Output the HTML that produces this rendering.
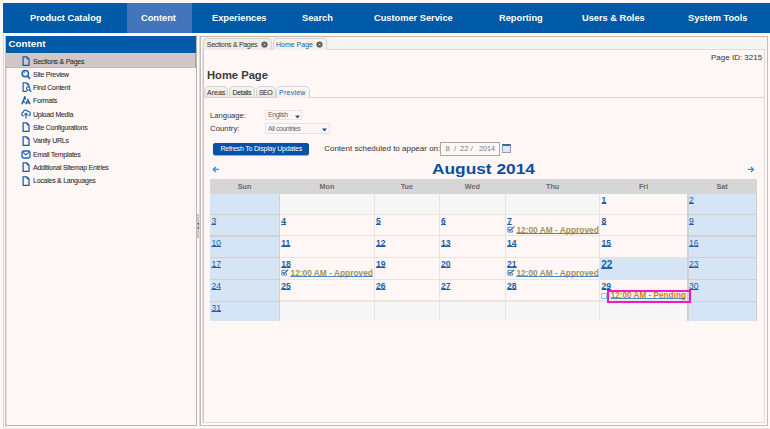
<!DOCTYPE html><html><head><meta charset="utf-8"><style>
*{margin:0;padding:0;box-sizing:border-box}
html,body{width:770px;height:429px;overflow:hidden;background:#fff6f6;font-family:"Liberation Sans",sans-serif;color:#333;position:relative}
.a{position:absolute;white-space:nowrap}
.nav{left:3px;top:3px;width:767px;height:29.5px;background:#005aa7}
.ni{color:#fff;font-weight:bold;font-size:8.2px;line-height:10px;transform:scaleX(1.13);transform-origin:0 0}
.side{font-size:7px;letter-spacing:-0.25px;line-height:8px;color:#2b2b2b;-webkit-text-stroke:0.07px #2b2b2b}
.ic{position:absolute}
.cal-l{color:#1f5ea8;text-decoration:underline;font-size:8.6px;line-height:9px}
.wd{font-weight:bold}
.cal-l{text-underline-offset:0px;text-decoration-skip-ink:none}
.ev{font-size:8.35px;font-weight:bold;line-height:9px;text-decoration:underline;text-decoration-color:#4a86c8;text-underline-offset:0px;text-decoration-skip-ink:none}
</style></head><body>
<div class="a nav"></div>
<div class="a" style="left:127px;top:3px;width:65px;height:29.5px;background:#4375bc"></div>
<div class="a ni" style="left:29.5px;top:14.4px">Product Catalog</div>
<div class="a ni" style="left:141.3px;top:14.4px">Content</div>
<div class="a ni" style="left:212.4px;top:14.4px">Experiences</div>
<div class="a ni" style="left:301.5px;top:14.4px">Search</div>
<div class="a ni" style="left:374.2px;top:14.4px">Customer Service</div>
<div class="a ni" style="left:499.1px;top:14.4px">Reporting</div>
<div class="a ni" style="left:582.1px;top:14.4px">Users &amp; Roles</div>
<div class="a ni" style="left:687.5px;top:14.4px">System Tools</div>
<div class="a" style="left:3px;top:34.5px;width:1px;height:392px;background:#d7d6d8"></div>
<div class="a" style="left:6px;top:53px;width:1px;height:372px;background:#e2e0e0"></div>
<div class="a" style="left:5px;top:35px;width:192px;height:391px;border:1px solid #b8b8b2;border-top:none;border-left-color:#c6bfc1"></div>
<div class="a" style="left:6px;top:36px;width:190px;height:17px;background:#005aa7"></div>
<div class="a" style="left:8.5px;top:38.3px;color:#fff;font-weight:bold;font-size:9.8px;line-height:11px">Content</div>
<div class="a" style="left:6px;top:53px;width:190px;height:15px;background:#d1c7c8;border-top:1px dotted #e0cdb8;border-bottom:1px dotted #aeaaa2;border-right:1px solid #aaa6a2"></div>
<div class="a side" style="left:33px;top:57.50px">Sections &amp; Pages</div>
<svg class="ic" style="left:21.5px;top:55.80px" width="8" height="11" viewBox="0 0 8 11"><path d="M1.1 0.9 H4.9 L7 3 V9.4 H1.1 Z" fill="none" stroke="#1559aa" stroke-width="1.25" stroke-linejoin="round"/><path d="M4.6 0.9 L7 3.3 H4.6 Z" fill="#1559aa"/></svg>
<div class="a side" style="left:33px;top:70.83px">Site Preview</div>
<svg class="ic" style="left:21px;top:69.13px" width="10" height="11" viewBox="0 0 10 11"><circle cx="4.3" cy="4.6" r="3.2" fill="none" stroke="#1b64b3" stroke-width="1.5"/><path d="M6.5 7 L9 9.8" stroke="#1b64b3" stroke-width="1.8"/><path d="M2.8 4.2 A1.5 1.5 0 0 1 4.5 2.8" fill="none" stroke="#1b64b3" stroke-width="0.9"/></svg>
<div class="a side" style="left:33px;top:84.16px">Find Content</div>
<svg class="ic" style="left:21.5px;top:82.46px" width="10" height="11" viewBox="0 0 10 11"><path d="M7 5 V3 L4.9 0.9 H1.1 V9.4 H5" fill="none" stroke="#1b64b3" stroke-width="1.25" stroke-linejoin="round"/><path d="M4.6 0.9 L7 3.3 H4.6 Z" fill="#1b64b3"/><circle cx="6.2" cy="6.6" r="1.7" fill="none" stroke="#1b64b3" stroke-width="1.1"/><path d="M7.4 7.8 L9.3 9.8" stroke="#1b64b3" stroke-width="1.3"/></svg>
<div class="a side" style="left:33px;top:97.49px">Formats</div>
<svg class="ic" style="left:21px;top:95.79px" width="10" height="11" viewBox="0 0 10 11"><path d="M0.9 8.3 L3.8 0.9 L4.6 3.5 M1.8 6 H4" fill="none" stroke="#1b64b3" stroke-width="1.5"/><path d="M4.6 8.3 L6.9 3.7 L9.2 8.3 M5.5 6.9 H8.3" fill="none" stroke="#1b64b3" stroke-width="1.3"/></svg>
<div class="a side" style="left:33px;top:110.82px">Upload Media</div>
<svg class="ic" style="left:20.5px;top:109.12px" width="10" height="10" viewBox="0 0 11 11"><path d="M3 7.5 H2.5 A2 2 0 0 1 2.3 3.6 A2.8 2.8 0 0 1 7.6 2.8 A2.3 2.3 0 0 1 8.3 7.5 H8" fill="none" stroke="#1b64b3" stroke-width="1.3"/><path d="M5.5 10.5 V5 M3.8 6.6 L5.5 4.8 L7.2 6.6" fill="none" stroke="#1b64b3" stroke-width="1.3"/></svg>
<div class="a side" style="left:33px;top:124.15px">Site Configurations</div>
<svg class="ic" style="left:21.5px;top:122.45px" width="8" height="11" viewBox="0 0 8 11"><path d="M1.1 0.9 H4.9 L7 3 V9.4 H1.1 Z" fill="none" stroke="#1559aa" stroke-width="1.25" stroke-linejoin="round"/><path d="M4.6 0.9 L7 3.3 H4.6 Z" fill="#1559aa"/></svg>
<div class="a side" style="left:33px;top:137.48px">Vanity URLs</div>
<svg class="ic" style="left:21.5px;top:135.78px" width="8" height="11" viewBox="0 0 8 11"><path d="M1.1 0.9 H4.9 L7 3 V9.4 H1.1 Z" fill="none" stroke="#1559aa" stroke-width="1.25" stroke-linejoin="round"/><path d="M4.6 0.9 L7 3.3 H4.6 Z" fill="#1559aa"/></svg>
<div class="a side" style="left:33px;top:150.81px">Email Templates</div>
<svg class="ic" style="left:21px;top:149.11px" width="10" height="11" viewBox="0 0 10 11"><rect x="1" y="2" width="8" height="7" rx="1.8" fill="none" stroke="#1b64b3" stroke-width="1.3"/><path d="M1.8 3.2 L5 6 L8.2 3.2" fill="none" stroke="#1b64b3" stroke-width="1.1"/></svg>
<div class="a side" style="left:33px;top:164.14px">Additional Sitemap Entries</div>
<svg class="ic" style="left:21.5px;top:162.44px" width="8" height="11" viewBox="0 0 8 11"><path d="M1.1 0.9 H4.9 L7 3 V9.4 H1.1 Z" fill="none" stroke="#1559aa" stroke-width="1.25" stroke-linejoin="round"/><path d="M4.6 0.9 L7 3.3 H4.6 Z" fill="#1559aa"/></svg>
<div class="a side" style="left:33px;top:177.47px">Locales &amp; Languages</div>
<svg class="ic" style="left:21.5px;top:175.77px" width="8" height="11" viewBox="0 0 8 11"><path d="M1.1 0.9 H4.9 L7 3 V9.4 H1.1 Z" fill="none" stroke="#1559aa" stroke-width="1.25" stroke-linejoin="round"/><path d="M4.6 0.9 L7 3.3 H4.6 Z" fill="#1559aa"/></svg>
<div class="a" style="left:197px;top:214px;width:3px;height:24px;background:repeating-linear-gradient(#d8d2d4 0 1px,#c4bec0 1px 2px)"></div>
<svg class="ic" style="left:197px;top:221.5px" width="3" height="8" viewBox="0 0 3 8"><path d="M2.6 0.3 L0.4 1.8 L2.6 3.2 Z M2.6 4.4 L0.4 5.9 L2.6 7.3 Z" fill="#333"/></svg>
<div class="a" style="left:199px;top:36px;width:1px;height:390px;background:#dcd8dc"></div>
<div class="a" style="left:200px;top:35.5px;width:568px;height:390.5px;border:1px solid #c2bdbd;border-top-color:#bdb9b9;background:#fff6f6"></div>
<div class="a" style="left:201px;top:36.5px;width:566px;height:13px;background:#f5f5f4"></div>
<div class="a" style="left:202px;top:49px;width:1px;height:374px;background:#e8e6de"></div>
<div class="a" style="left:203px;top:49px;width:562px;height:374px;border:1px solid #dfddd3;border-left-color:#cfc7c8;background:#fff6f6"></div>
<div class="a" style="left:203.3px;top:38px;width:68.5px;height:11.5px;border:1px solid #d6d3cd;border-bottom:none;border-radius:4.5px 4.5px 0 0;background:#eeede7"></div>
<div class="a" style="left:272.7px;top:38px;width:54.8px;height:11.5px;border:1px solid #d6d3cd;border-bottom:none;border-radius:4.5px 4.5px 0 0;background:#f3f3ee"></div>
<div class="a" style="left:206.8px;top:41px;font-size:7px;letter-spacing:-0.3px;line-height:8px;color:#333">Sections &amp; Pages</div>
<div class="a" style="left:276px;top:41px;font-size:7px;line-height:8px;color:#1a5aae">Home Page</div>
<svg class="ic" style="left:260.9px;top:41.1px" width="7" height="7" viewBox="0 0 7 7"><circle cx="3.5" cy="3.5" r="3.1" fill="#5c5c5c"/><path d="M2.6 2.6 L4.4 4.4 M4.4 2.6 L2.6 4.4" stroke="#f4f4f4" stroke-width="0.9"/></svg>
<svg class="ic" style="left:316.1px;top:41.1px" width="7" height="7" viewBox="0 0 7 7"><circle cx="3.5" cy="3.5" r="3.1" fill="#5c5c5c"/><path d="M2.6 2.6 L4.4 4.4 M4.4 2.6 L2.6 4.4" stroke="#f4f4f4" stroke-width="0.9"/></svg>
<div class="a" style="left:711px;top:53px;font-size:8px;line-height:9px;color:#333">Page ID: 3215</div>
<div class="a" style="left:207px;top:69px;font-size:11.2px;font-weight:bold;line-height:12px;color:#3a3a3a">Home Page</div>
<div class="a" style="left:203px;top:97px;width:561px;height:1px;background:#dad6cc"></div>
<div class="a" style="left:204px;top:86.3px;width:24px;height:11.2px;border:1px solid #d6d3cc;border-bottom:none;border-radius:5px 5px 0 0;background:linear-gradient(#f6f5f1,#e6e5df)"></div>
<div class="a" style="left:207px;top:88.5px;font-size:7px;letter-spacing:0px;line-height:8px;color:#2b2b2b">Areas</div>
<div class="a" style="left:228.5px;top:86.3px;width:26.0px;height:11.2px;border:1px solid #d6d3cc;border-bottom:none;border-radius:5px 5px 0 0;background:linear-gradient(#f6f5f1,#e6e5df)"></div>
<div class="a" style="left:232.5px;top:88.5px;font-size:7px;letter-spacing:-0.4px;line-height:8px;color:#2b2b2b">Details</div>
<div class="a" style="left:255.5px;top:86.3px;width:20.0px;height:11.2px;border:1px solid #d6d3cc;border-bottom:none;border-radius:5px 5px 0 0;background:linear-gradient(#f6f5f1,#e6e5df)"></div>
<div class="a" style="left:259px;top:88.5px;font-size:7px;letter-spacing:-0.6px;line-height:8px;color:#2b2b2b">SEO</div>
<div class="a" style="left:276px;top:86.3px;width:34px;height:11.7px;border:1px solid #d6d3cc;border-bottom:none;border-radius:5px 5px 0 0;background:linear-gradient(#fbfaf8,#f3f2ee)"></div>
<div class="a" style="left:279px;top:88.5px;font-size:7px;letter-spacing:0.25px;line-height:8px;color:#1a5aae">Preview</div>
<div class="a" style="left:210px;top:111px;font-size:7.6px;line-height:9px;color:#333">Language:</div>
<div class="a" style="left:210px;top:124px;font-size:7.8px;line-height:9px;color:#333">Country:</div>
<div class="a" style="left:265px;top:110px;width:37px;height:10px;border:1px solid #e2e4ea;background:#fdf7f7"></div>
<div class="a" style="left:265px;top:123px;width:65px;height:10.5px;border:1px solid #e2e4ea;background:#fdf7f7"></div>
<div class="a" style="left:268px;top:111px;font-size:7px;letter-spacing:-0.45px;line-height:8px;color:#666">English</div>
<div class="a" style="left:268px;top:124.5px;font-size:7px;letter-spacing:-0.45px;line-height:8px;color:#666">All countries</div>
<svg class="ic" style="left:294.5px;top:114.5px" width="5" height="4" viewBox="0 0 5 4"><path d="M0 0.5 H5 L2.5 3.5 Z" fill="#1f4f8f"/></svg>
<svg class="ic" style="left:322.0px;top:128.0px" width="5" height="4" viewBox="0 0 5 4"><path d="M0 0.5 H5 L2.5 3.5 Z" fill="#1f4f8f"/></svg>
<div class="a" style="left:213px;top:142.7px;width:96px;height:12px;background:#0752a6;border-radius:2.5px;box-shadow:0 0.6px 0.8px rgba(0,0,0,0.35)"></div>
<div class="a" style="left:220.5px;top:145.4px;font-size:7px;letter-spacing:-0.2px;line-height:8px;color:#fff">Refresh To Display Updates</div>
<div class="a" style="left:324.2px;top:144.3px;font-size:8px;line-height:9px;color:#333">Content scheduled to appear on:</div>
<div class="a" style="left:440px;top:142.2px;width:60px;height:13.5px;border:1px solid #aaa89f;background:#fdf8f8"></div>
<div class="a" style="left:445.5px;top:145px;font-size:7.5px;line-height:8px;color:#777">8</div>
<div class="a" style="left:454px;top:145px;font-size:7.5px;line-height:8px;color:#777">/</div>
<div class="a" style="left:460px;top:145px;font-size:7.5px;line-height:8px;color:#777">22</div>
<div class="a" style="left:470.8px;top:145px;font-size:7.5px;line-height:8px;color:#777">/</div>
<div class="a" style="left:479px;top:145.2px;font-size:7.2px;line-height:8px;color:#777">2014</div>
<div class="a" style="left:502px;top:144px;width:9px;height:9px;border:1px solid #8aa0bb;background:#e4e6ea;border-top:2px solid #3a68a0"></div>
<div class="a" style="left:432px;top:160.5px;font-size:15.2px;transform:scaleX(1.14);transform-origin:0 0;font-weight:bold;line-height:16px;color:#0b4f9e">August 2014</div>
<svg class="ic" style="left:212px;top:166px" width="8" height="7" viewBox="0 0 8 7"><path d="M7 3.4 H1.5 M3.9 0.9 L1.3 3.4 L3.9 5.9" fill="none" stroke="#3190e6" stroke-width="1.4"/></svg>
<svg class="ic" style="left:747px;top:166px" width="8" height="7" viewBox="0 0 8 7"><path d="M0.8 3.4 H6.3 M3.9 0.9 L6.5 3.4 L3.9 5.9" fill="none" stroke="#3190e6" stroke-width="1.4"/></svg>
<div class="a" style="left:210.2px;top:179px;width:546.5px;height:14.5px;background:#d7d6d6"></div>
<div class="a" style="left:210.20px;top:182.8px;width:68.80px;text-align:center;font-size:7.2px;font-weight:bold;line-height:8px;color:#6a6a6a">Sun</div>
<div class="a" style="left:280.00px;top:182.8px;width:93.80px;text-align:center;font-size:7.2px;font-weight:bold;line-height:8px;color:#6a6a6a">Mon</div>
<div class="a" style="left:374.80px;top:182.8px;width:64.10px;text-align:center;font-size:7.2px;font-weight:bold;line-height:8px;color:#6a6a6a">Tue</div>
<div class="a" style="left:439.90px;top:182.8px;width:65.00px;text-align:center;font-size:7.2px;font-weight:bold;line-height:8px;color:#6a6a6a">Wed</div>
<div class="a" style="left:505.90px;top:182.8px;width:93.50px;text-align:center;font-size:7.2px;font-weight:bold;line-height:8px;color:#6a6a6a">Thu</div>
<div class="a" style="left:600.40px;top:182.8px;width:86.40px;text-align:center;font-size:7.2px;font-weight:bold;line-height:8px;color:#6a6a6a">Fri</div>
<div class="a" style="left:687.80px;top:182.8px;width:68.70px;text-align:center;font-size:7.2px;font-weight:bold;line-height:8px;color:#6a6a6a">Sat</div>
<div class="a" style="left:210.2px;top:193.5px;width:546.3px;height:127.5px;background:#e8e5dc"></div>
<div class="a" style="left:210.2px;top:193.5px;width:70px;height:127.5px;background:#d3d0cc"></div>
<div class="a" style="left:687.3px;top:193.5px;width:69.5px;height:127.5px;background:#d3d0cc"></div>
<div class="a" style="left:210.20px;top:193.50px;width:68.90px;height:20.60px;background:#d5e5f5"></div>
<div class="a" style="left:280.00px;top:193.50px;width:93.80px;height:20.50px;background:#f7f7f7"></div>
<div class="a" style="left:374.80px;top:193.50px;width:64.10px;height:20.50px;background:#f7f7f7"></div>
<div class="a" style="left:439.90px;top:193.50px;width:65.00px;height:20.50px;background:#f7f7f7"></div>
<div class="a" style="left:505.90px;top:193.50px;width:93.50px;height:20.50px;background:#f7f7f7"></div>
<div class="a" style="left:600.40px;top:193.50px;width:86.40px;height:20.50px;background:#fff6f6"></div>
<div class="a cal-l wd" style="left:601.60px;top:195.80px">1</div>
<div class="a" style="left:688.50px;top:193.50px;width:67.70px;height:20.60px;background:#d5e5f5"></div>
<div class="a cal-l" style="left:689.00px;top:195.80px">2</div>
<div class="a" style="left:210.20px;top:215.30px;width:68.90px;height:20.10px;background:#d5e5f5"></div>
<div class="a cal-l" style="left:211.40px;top:217.30px">3</div>
<div class="a" style="left:280.00px;top:215.00px;width:93.80px;height:20.30px;background:#fff6f6"></div>
<div class="a cal-l wd" style="left:281.20px;top:217.30px">4</div>
<div class="a" style="left:374.80px;top:215.00px;width:64.10px;height:20.30px;background:#fff6f6"></div>
<div class="a cal-l wd" style="left:376.00px;top:217.30px">5</div>
<div class="a" style="left:439.90px;top:215.00px;width:65.00px;height:20.30px;background:#fff6f6"></div>
<div class="a cal-l wd" style="left:441.10px;top:217.30px">6</div>
<div class="a" style="left:505.90px;top:215.00px;width:93.50px;height:20.30px;background:#fff6f6"></div>
<div class="a cal-l wd" style="left:507.10px;top:217.30px">7</div>
<svg class="ic" style="left:507.10px;top:226.20px" width="8" height="7" viewBox="0 0 8 7"><path d="M4.8 1.3 H0.9 V6.1 H5.6 V4" fill="none" stroke="#3d7bc2" stroke-width="0.9"/><path d="M1.6 3.2 L3.1 4.7 L7.2 0.6" fill="none" stroke="#1f5fb0" stroke-width="1.2"/></svg>
<div class="a ev" style="left:516.40px;top:225.60px;color:#a39456">12:00 AM - Approved</div>
<div class="a" style="left:600.40px;top:215.00px;width:86.40px;height:20.30px;background:#fff6f6"></div>
<div class="a cal-l wd" style="left:601.60px;top:217.30px">8</div>
<div class="a" style="left:688.50px;top:215.30px;width:67.70px;height:20.10px;background:#d5e5f5"></div>
<div class="a cal-l" style="left:689.00px;top:217.30px">9</div>
<div class="a" style="left:210.20px;top:236.60px;width:68.90px;height:20.50px;background:#d5e5f5"></div>
<div class="a cal-l" style="left:211.40px;top:238.60px">10</div>
<div class="a" style="left:280.00px;top:236.30px;width:93.80px;height:20.70px;background:#fff6f6"></div>
<div class="a cal-l wd" style="left:281.20px;top:238.60px">11</div>
<div class="a" style="left:374.80px;top:236.30px;width:64.10px;height:20.70px;background:#fff6f6"></div>
<div class="a cal-l wd" style="left:376.00px;top:238.60px">12</div>
<div class="a" style="left:439.90px;top:236.30px;width:65.00px;height:20.70px;background:#fff6f6"></div>
<div class="a cal-l wd" style="left:441.10px;top:238.60px">13</div>
<div class="a" style="left:505.90px;top:236.30px;width:93.50px;height:20.70px;background:#fff6f6"></div>
<div class="a cal-l wd" style="left:507.10px;top:238.60px">14</div>
<div class="a" style="left:600.40px;top:236.30px;width:86.40px;height:20.70px;background:#fff6f6"></div>
<div class="a cal-l wd" style="left:601.60px;top:238.60px">15</div>
<div class="a" style="left:688.50px;top:236.60px;width:67.70px;height:20.50px;background:#d5e5f5"></div>
<div class="a cal-l" style="left:689.00px;top:238.60px">16</div>
<div class="a" style="left:210.20px;top:258.30px;width:68.90px;height:20.90px;background:#d5e5f5"></div>
<div class="a cal-l" style="left:211.40px;top:260.30px">17</div>
<div class="a" style="left:280.00px;top:258.00px;width:93.80px;height:21.10px;background:#fff6f6"></div>
<div class="a cal-l wd" style="left:281.20px;top:260.30px">18</div>
<svg class="ic" style="left:281.20px;top:269.20px" width="8" height="7" viewBox="0 0 8 7"><path d="M4.8 1.3 H0.9 V6.1 H5.6 V4" fill="none" stroke="#3d7bc2" stroke-width="0.9"/><path d="M1.6 3.2 L3.1 4.7 L7.2 0.6" fill="none" stroke="#1f5fb0" stroke-width="1.2"/></svg>
<div class="a ev" style="left:290.50px;top:268.60px;color:#a39456">12:00 AM - Approved</div>
<div class="a" style="left:374.80px;top:258.00px;width:64.10px;height:21.10px;background:#fff6f6"></div>
<div class="a cal-l wd" style="left:376.00px;top:260.30px">19</div>
<div class="a" style="left:439.90px;top:258.00px;width:65.00px;height:21.10px;background:#fff6f6"></div>
<div class="a cal-l wd" style="left:441.10px;top:260.30px">20</div>
<div class="a" style="left:505.90px;top:258.00px;width:93.50px;height:21.10px;background:#fff6f6"></div>
<div class="a cal-l wd" style="left:507.10px;top:260.30px">21</div>
<svg class="ic" style="left:507.10px;top:269.20px" width="8" height="7" viewBox="0 0 8 7"><path d="M4.8 1.3 H0.9 V6.1 H5.6 V4" fill="none" stroke="#3d7bc2" stroke-width="0.9"/><path d="M1.6 3.2 L3.1 4.7 L7.2 0.6" fill="none" stroke="#1f5fb0" stroke-width="1.2"/></svg>
<div class="a ev" style="left:516.40px;top:268.60px;color:#a39456">12:00 AM - Approved</div>
<div class="a" style="left:600.40px;top:258.00px;width:86.40px;height:21.10px;background:#d5e5f5"></div>
<div class="a cal-l wd" style="left:601.20px;top:259.40px;font-size:10px;line-height:11px">22</div>
<div class="a" style="left:688.50px;top:258.30px;width:67.70px;height:20.90px;background:#d5e5f5"></div>
<div class="a cal-l" style="left:689.00px;top:260.30px">23</div>
<div class="a" style="left:210.20px;top:280.40px;width:68.90px;height:20.20px;background:#d5e5f5"></div>
<div class="a cal-l" style="left:211.40px;top:282.40px">24</div>
<div class="a" style="left:280.00px;top:280.10px;width:93.80px;height:20.40px;background:#fff6f6"></div>
<div class="a cal-l wd" style="left:281.20px;top:282.40px">25</div>
<div class="a" style="left:374.80px;top:280.10px;width:64.10px;height:20.40px;background:#fff6f6"></div>
<div class="a cal-l wd" style="left:376.00px;top:282.40px">26</div>
<div class="a" style="left:439.90px;top:280.10px;width:65.00px;height:20.40px;background:#fff6f6"></div>
<div class="a cal-l wd" style="left:441.10px;top:282.40px">27</div>
<div class="a" style="left:505.90px;top:280.10px;width:93.50px;height:20.40px;background:#fff6f6"></div>
<div class="a cal-l wd" style="left:507.10px;top:282.40px">28</div>
<div class="a" style="left:600.40px;top:280.10px;width:86.40px;height:20.40px;background:#fff6f6"></div>
<div class="a cal-l wd" style="left:601.60px;top:282.40px">29</div>
<svg class="ic" style="left:601.20px;top:292.70px" width="6" height="6" viewBox="0 0 6 6"><rect x="0.5" y="0.5" width="5" height="5" fill="none" stroke="#9cc4ea" stroke-width="1"/></svg>
<div class="a ev" style="left:610.70px;top:290.70px;color:#d67a14;font-size:8.2px">12:00 AM - Pending</div>
<div class="a" style="left:688.50px;top:280.40px;width:67.70px;height:20.20px;background:#d5e5f5"></div>
<div class="a cal-l" style="left:689.00px;top:282.40px">30</div>
<div class="a" style="left:210.20px;top:301.80px;width:68.90px;height:19.20px;background:#d5e5f5"></div>
<div class="a cal-l" style="left:211.40px;top:303.80px">31</div>
<div class="a" style="left:280.00px;top:301.50px;width:93.80px;height:19.50px;background:#f7f7f7"></div>
<div class="a" style="left:374.80px;top:301.50px;width:64.10px;height:19.50px;background:#f7f7f7"></div>
<div class="a" style="left:439.90px;top:301.50px;width:65.00px;height:19.50px;background:#f7f7f7"></div>
<div class="a" style="left:505.90px;top:301.50px;width:93.50px;height:19.50px;background:#f7f7f7"></div>
<div class="a" style="left:600.40px;top:301.50px;width:86.40px;height:19.50px;background:#f7f7f7"></div>
<div class="a" style="left:688.50px;top:301.80px;width:67.70px;height:19.20px;background:#d5e5f5"></div>
<div class="a" style="left:607px;top:290px;width:84px;height:12.5px;border:2px solid #f615cc"></div>
<div class="a" style="left:3px;top:427.5px;width:767px;height:1.5px;background:#ebe8ea"></div>
</body></html>
